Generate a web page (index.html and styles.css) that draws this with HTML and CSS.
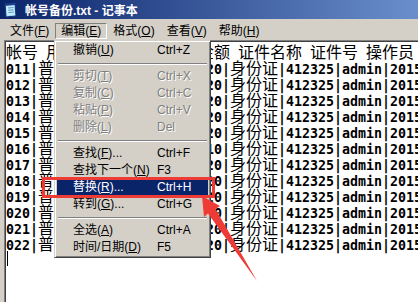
FILE: index.html
```html
<!DOCTYPE html>
<html lang="zh-CN">
<head>
    <meta charset="UTF-8">
    <meta name="viewport" content="width=device-width, initial-scale=1.0">
    <title>帐号备份.txt - 记事本</title>
    <link rel="stylesheet" href="styles.css">
</head>
<body>
    <div class="window">
        <div class="titlebar">
            <svg class="app-icon" viewBox="0 0 14 16">
                <path d="M2 2 L12 1 L13 14 L3 15 Z" fill="#8fd3f4" stroke="#14306e" stroke-width="1"/>
                <path d="M3 3 L11 2.3 L12 13 L4 13.8 Z" fill="#c8ecfb"/>
                <path d="M2 2 L12 1 L12.2 3 L2.2 4 Z" fill="#1c3f8f"/>
                <path d="M5 6 L10.5 5.5 M5.2 8.3 L10.7 7.8 M5.4 10.6 L10.9 10.1" stroke="#3b7fc4" stroke-width="0.8"/>
            </svg>
            <span class="title">帐号备份.txt - 记事本</span>
        </div>
        <div class="menubar">
            <span class="menu-item">文件(<u>F</u>)</span>
            <span class="menu-item open">编辑(<u>E</u>)</span>
            <span class="menu-item">格式(<u>O</u>)</span>
            <span class="menu-item">查看(<u>V</u>)</span>
            <span class="menu-item">帮助(<u>H</u>)</span>
        </div>
        <div class="editor">
            <div class="ln"><span class="c">帐号</span> <span class="c">用户名</span> <span class="c">类型</span> <span class="c">充值额</span> <span class="c">金额</span> <span class="c">证件名称</span> <span class="c">证件号</span> <span class="c">操作员</span></div>
            <div class="ln">011|<span class="c">普通用户</span>|13912345678|20|<span class="c">身份证</span>|412325|admin|2015-03-20</div>
            <div class="ln">012|<span class="c">普通用户</span>|13912345678|20|<span class="c">身份证</span>|412325|admin|2015-03-20</div>
            <div class="ln">013|<span class="c">普通用户</span>|13912345678|20|<span class="c">身份证</span>|412325|admin|2015-03-20</div>
            <div class="ln">014|<span class="c">普通用户</span>|13912345678|20|<span class="c">身份证</span>|412325|admin|2015-03-20</div>
            <div class="ln">015|<span class="c">普通用户</span>|13912345678|20|<span class="c">身份证</span>|412325|admin|2015-03-20</div>
            <div class="ln">016|<span class="c">普通用户</span>|13912345678|10|<span class="c">身份证</span>|412325|admin|2015-03-20</div>
            <div class="ln">017|<span class="c">普通用户</span>|13912345678|20|<span class="c">身份证</span>|412325|admin|2015-03-20</div>
            <div class="ln">018|<span class="c">普通用户</span>|13912345678|20|<span class="c">身份证</span>|412325|admin|2015-03-20</div>
            <div class="ln">019|<span class="c">普通用户</span>|13912345678|20|<span class="c">身份证</span>|412325|admin|2015-03-20</div>
            <div class="ln">020|<span class="c">普通用户</span>|13912345678|10|<span class="c">身份证</span>|412325|admin|2015-03-20</div>
            <div class="ln">021|<span class="c">普通用户</span>|13912345678|20|<span class="c">身份证</span>|412325|admin|2015-03-20</div>
            <div class="ln">022|<span class="c">普通用户</span>|13912345678|20|<span class="c">身份证</span>|412325|admin|2015-03-20</div>
            <div class="ln"><span class="caret"></span></div>
        </div>
        <div class="dropdown">
            <div class="mi"><span class="lbl">撤销(<u>U</u>)</span><span>Ctrl+Z</span></div>
            <div class="sep"></div>
            <div class="mi off"><span class="lbl">剪切(<u>T</u>)</span><span>Ctrl+X</span></div>
            <div class="mi off"><span class="lbl">复制(<u>C</u>)</span><span>Ctrl+C</span></div>
            <div class="mi off"><span class="lbl">粘贴(<u>P</u>)</span><span>Ctrl+V</span></div>
            <div class="mi off"><span class="lbl">删除(<u>L</u>)</span><span>Del</span></div>
            <div class="sep"></div>
            <div class="mi"><span class="lbl">查找(<u>F</u>)...</span><span>Ctrl+F</span></div>
            <div class="mi"><span class="lbl">查找下一个(<u>N</u>)</span><span>F3</span></div>
            <div class="mi hot"><span class="lbl">替换(<u>R</u>)...</span><span>Ctrl+H</span></div>
            <div class="mi"><span class="lbl">转到(<u>G</u>)...</span><span>Ctrl+G</span></div>
            <div class="sep"></div>
            <div class="mi"><span class="lbl">全选(<u>A</u>)</span><span>Ctrl+A</span></div>
            <div class="mi"><span class="lbl">时间/日期(<u>D</u>)</span><span>F5</span></div>
        </div>
    </div>
    <div class="mark-box"></div>
    <svg class="mark-arrow" viewBox="0 0 418 302">
        <polygon points="202,196 220,206 215.5,209 257,281 208,213.5 204,217" fill="#ef3b36"/>
    </svg>
</body>
</html>
```

FILE: styles.css
```css
* {
    box-sizing: border-box;
}
body {
    margin: 0;
    width: 418px;
    height: 302px;
    overflow: hidden;
    background: #d4d0c8;
    font-family: "Liberation Sans", "Noto Sans CJK SC", sans-serif;
    font-size: 12px;
    color: #000;
}
.window {
    position: relative;
    height: 302px;
}
.titlebar {
    height: 19px;
    display: flex;
    align-items: center;
    padding-left: 3px;
    background: linear-gradient(to right, #0a246a, #6a8ecb);
    color: #fff;
    font-weight: bold;
}
.app-icon {
    width: 14px;
    height: 16px;
    margin-right: 8px;
}
.menubar {
    display: flex;
    height: 21px;
    padding: 4px 0 0 4px;
}
.menu-item {
    height: 16px;
    padding: 0 5px;
    line-height: 14px;
    border: 1px solid transparent;
    white-space: nowrap;
}
.menu-item.open {
    border-color: #808080 #fff #fff #808080;
}
.editor {
    height: 270px;
    margin: 0 -10px 0 4px;
    padding: 2px 0 0 1px;
    background: #fff;
    border: 1px solid;
    border-color: #808080 #fff #fff #808080;
    box-shadow: inset 1px 1px #404040;
    overflow: hidden;
    font-family: "DejaVu Sans Mono", monospace;
    font-size: 13.29px;
    font-weight: bold;
}
.ln {
    height: 16px;
    line-height: 16px;
    white-space: pre;
}
.c {
    font-family: "Noto Sans CJK SC", sans-serif;
    font-size: 16px;
    font-weight: normal;
    line-height: 16px;
}
.caret {
    display: inline-block;
    width: 1px;
    height: 15px;
    margin-left: 1px;
    vertical-align: top;
    background: #000;
}
.dropdown {
    position: absolute;
    left: 54px;
    top: 40px;
    width: 157px;
    padding: 1px 2px;
    background: #d4d0c8;
    border: 1px solid;
    border-color: #d4d0c8 #404040 #404040 #d4d0c8;
    box-shadow: inset 1px 1px #fff, inset -1px -1px #808080;
}
.mi {
    display: flex;
    height: 17px;
    line-height: 17px;
    padding-left: 16px;
    white-space: nowrap;
}
.mi .lbl {
    width: 84px;
}
.mi.off {
    color: #808080;
    text-shadow: 1px 1px #fff;
}
.mi.hot {
    background: #0a246a;
    color: #fff;
}
.sep {
    margin: 4px 1px 3px;
    border-top: 1px solid #808080;
    border-bottom: 1px solid #fff;
}
.mark-box {
    position: absolute;
    left: 42px;
    top: 177px;
    width: 173px;
    height: 21px;
    border: 3px solid #ef3b36;
}
.mark-arrow {
    position: absolute;
    left: 0;
    top: 0;
    width: 418px;
    height: 302px;
}
```
